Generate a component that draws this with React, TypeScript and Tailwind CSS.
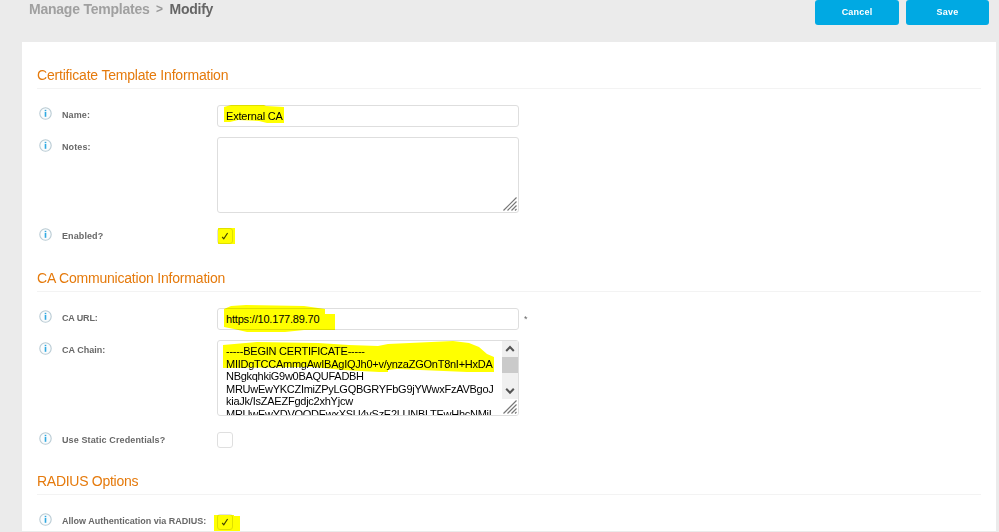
import type { ReactNode } from "react";

function InfoIcon() {
  return (
    <svg width="13" height="13" viewBox="0 0 13 13" className="block shrink-0">
      <circle cx="6.5" cy="6.5" r="5.7" fill="#fafcfd" stroke="#b9cbd4" strokeWidth="1.1" />
      <rect x="5.7" y="5" width="1.6" height="4.8" fill="#2fa8e2" />
      <rect x="5.7" y="2.8" width="1.6" height="1.4" fill="#2fa8e2" />
    </svg>
  );
}

function Section({ title, tracking, children }: { title: string; tracking: string; children: ReactNode }) {
  return (
    <section className="h-[203px] shrink-0">
      <h2 className={`flex h-[22px] items-center border-b border-[#f3f3f3] pb-[6px] text-[14px] leading-[16px] whitespace-nowrap text-[#e57a0c] ${tracking}`}>
        {title}
      </h2>
      <div className="flex flex-col gap-[10px] pt-4">{children}</div>
    </section>
  );
}

function Row({ label, tracking = "tracking-[0.1px]", pad = "pt-[2px]", children }: { label: string; tracking?: string; pad?: string; children: ReactNode }) {
  return (
    <div className="flex items-start">
      <div className={`flex w-[180px] shrink-0 pl-[2px] ${pad}`}>
        <InfoIcon />
        <span className={`pt-[2px] pl-[10px] text-[9px] leading-[12px] font-bold whitespace-nowrap text-[#686868] ${tracking}`}>
          {label}
        </span>
      </div>
      <div className="relative">{children}</div>
    </div>
  );
}

function Highlight({ d, w, h, className }: { d: string; w: number; h: number; className: string }) {
  return (
    <svg
      width={w}
      height={h}
      viewBox={`0 0 ${w} ${h}`}
      className={`pointer-events-none absolute mix-blend-multiply ${className}`}
    >
      <path d={d} fill="#ffff00" />
    </svg>
  );
}

function Field({ value, tracking }: { value: string; tracking: string }) {
  return (
    <div className={`flex h-[22px] w-[302px] items-center rounded-[3px] border border-[#dedede] bg-white pl-[8px] text-[11px] text-black ${tracking}`}>
      {value}
    </div>
  );
}

function Grip() {
  return (
    <svg width="14" height="14" viewBox="0 0 14 14" className="absolute right-[1px] bottom-[1px]">
      <path d="M0.5 13.5L13.5 0.5M4.5 13.5L13.5 4.5M8.5 13.5L13.5 8.5M12 13.5L13.5 12" stroke="#777" strokeWidth="1.2" />
    </svg>
  );
}

function Check({ on = false }: { on?: boolean }) {
  return (
    <div className="flex size-4 items-center justify-center rounded-[3px] border border-[#dfdfdf] bg-white">
      {on && (
        <svg width="8" height="8" viewBox="0 0 8 8">
          <path d="M1.2 5L2.8 6.8L6.6 1" fill="none" stroke="#444" strokeWidth="1.2" />
        </svg>
      )}
    </div>
  );
}

const chain = [
  ["-----BEGIN CERTIFICATE-----", "tracking-[-0.23px]"],
  ["MIIDgTCCAmmgAwIBAgIQJh0+v/ynzaZGOnT8nI+HxDA", "tracking-[-0.25px]"],
  ["NBgkqhkiG9w0BAQUFADBH", "tracking-[-0.28px]"],
  ["MRUwEwYKCZImiZPyLGQBGRYFbG9jYWwxFzAVBgoJ", "tracking-[-0.27px]"],
  ["kiaJk/IsZAEZFgdjc2xhYjcw", "tracking-[-0.24px]"],
  ["MRUwEwYDVQQDEwxXSU4ySzE2LUNBLTEwHhcNMjI", "tracking-[-0.27px]"],
];

export default function App() {
  return (
    <div className="flex h-[532px] w-[999px] flex-col overflow-hidden bg-[#ebebeb] font-['Liberation_Sans',Arial,sans-serif]">
      <header className="flex h-[42px] shrink-0 items-start justify-between pr-[10px] pl-[29px]">
        <h1 className="flex text-[14px] leading-[18px] font-bold whitespace-nowrap text-[#a0a0a0]">
          <span className="tracking-[-0.23px]">Manage Templates</span>
          <span className="w-[20px] text-center text-[12px] leading-[19px] text-[#999]">&gt;</span>
          <span className="tracking-[-0.25px] text-[#666]">Modify</span>
        </h1>
        <div className="flex gap-[7px]">
          <button className="h-[25px] w-[84px] rounded-[3px] bg-[#00a9e3] text-[9px] font-bold tracking-[0.2px] text-white">Cancel</button>
          <button className="h-[25px] w-[83px] rounded-[3px] bg-[#00a9e3] text-[9px] font-bold tracking-[0.2px] text-white">Save</button>
        </div>
      </header>
      <main className="ml-[22px] flex h-[489px] w-[974px] flex-col overflow-hidden bg-white pt-[25px] pr-[15px] pl-[15px]">
        <Section title="Certificate Template Information" tracking="tracking-[-0.19px]">
          <Row label="Name:">
            <Field value="External CA" tracking="tracking-[-0.18px]" />
            <Highlight w={60} h={20} className="top-0 left-[7px]" d="M0 2L7 0H40L42 1L60 2V18H43L35 16L14 15L6 17H0Z" />
          </Row>
          <Row label="Notes:">
            <div className="relative h-[76px] w-[302px] rounded-[3px] border border-[#dedede]">
              <Grip />
            </div>
          </Row>
          <div className="pt-[5px]">
            <Row label="Enabled?" pad="pt-0">
              <Check on />
              <Highlight w={17} h={17} className="top-0 left-[1px]" d="M0 0H17V16H0Z" />
            </Row>
          </div>
        </Section>
        <Section title="CA Communication Information" tracking="tracking-[-0.2px]">
          <Row label="CA URL:" tracking="tracking-[-0.15px]">
            <Field value="https://10.177.89.70" tracking="tracking-[-0.19px]" />
            <span className="absolute top-[5px] left-[307px] text-[9px] leading-[12px] text-[#666]">*</span>
            <Highlight w={111} h={28} className="top-[-3px] left-[7px]" d="M0 4L7 1L22 0L80 1L101 4V9H111V25H80L61 27H23L10 24L0 22Z" />
          </Row>
          <Row label="CA Chain:" tracking="tracking-[0px]">
            <div className="relative h-[76px] w-[302px] overflow-hidden rounded-[3px] border border-[#dedede] bg-white">
              <div className="pt-[4px] pl-[8px] text-[11px] leading-[12.5px] text-black">
                {chain.map(([line, tracking]) => (
                  <div key={line} className={`whitespace-pre ${tracking}`}>{line}</div>
                ))}
              </div>
              <div className="absolute top-0 right-0 h-full w-[16px] bg-white">
                <div className="flex h-[58px] w-4 flex-col bg-[#f0f0f0]">
                  <svg width="16" height="16" viewBox="0 0 16 16">
                    <path d="M4.2 10L8 6L11.8 10" fill="none" stroke="#555" strokeWidth="2" />
                  </svg>
                  <div className="h-4 bg-[#cacaca]" />
                  <svg width="16" height="26" viewBox="0 0 16 26">
                    <path d="M4.2 15.8L8 19.8L11.8 15.8" fill="none" stroke="#555" strokeWidth="2" />
                  </svg>
                </div>
              </div>
              <Grip />
            </div>
            <Highlight w={272} h={34} className="top-[1px] left-[6px]" d="M0 4L34 1L95 2L126 4L155 5L165 3L230 0L246 2L256 6L264 13L271 16V31H244L174 28L165 29V31H156L120 29L90 26L0 27Z" />
          </Row>
          <div className="pt-[6px]">
            <Row label="Use Static Credentials?" tracking="tracking-[0.12px]" pad="pt-0">
              <Check />
            </Row>
          </div>
        </Section>
        <Section title="RADIUS Options" tracking="tracking-[-0.28px]">
          <div className="pt-[3px]">
            <Row label="Allow Authentication via RADIUS:" tracking="tracking-[0px]" pad="-mt-px">
              <Check on />
              <Highlight w={26} h={18} className="top-[1px] left-[-3px]" d="M0 0H20V1H26V17H0Z" />
            </Row>
          </div>
        </Section>
      </main>
    </div>
  );
}
